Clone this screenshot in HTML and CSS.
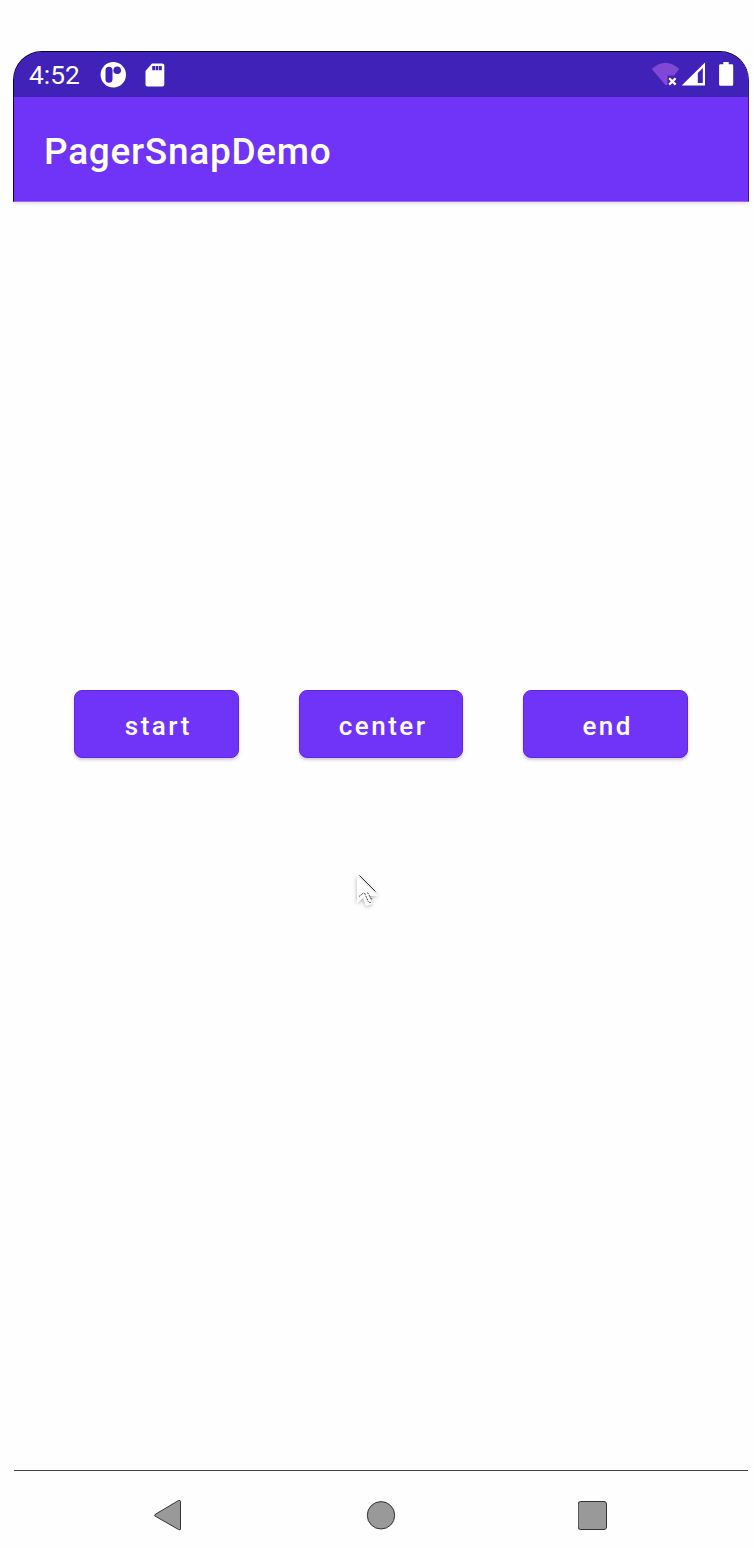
FILE: index.html
```
<!DOCTYPE html>
<html lang="en">
<head>
<meta charset="utf-8">
<title>PagerSnapDemo</title>
<link rel="stylesheet" href="styles.css">
</head>
<body>
<div class="phone">
  <header class="top">
    <div class="status">
      <span class="clock">4:52</span>
      <svg class="app-icon" width="26" height="26" viewBox="0 0 26 26">
        <circle cx="13.3" cy="12.7" r="12.7" fill="#fff"/>
        <rect x="5.5" y="4.8" width="7" height="16" rx="3.5" fill="#4022b8"/>
        <circle cx="17.2" cy="8.3" r="3.8" fill="#4022b8"/>
      </svg>
      <svg class="sd-icon" width="20" height="24" viewBox="0 0 20 24">
        <path d="M7 .5H17Q19.3 .5 19.3 2.5V21.5Q19.3 23.5 17.3 23.5H2.5Q.5 23.5.5 21.5V8Z" fill="#fff"/>
        <path d="M7.2 3h2.8v4.3H7.2zM10.6 3h2.8v4.3h-2.8zM14 3h2.8v4.3H14z" fill="#4022b8"/>
      </svg>
      <svg class="signals" width="84" height="28" viewBox="0 0 84 28">
        <path d="M-.2 8Q13.3-4.5 27.3 8L22 14.5H15.5V24H13.3Z" fill="#8148d5"/>
        <path d="M17.2 17.2l6.4 6.4M23.6 17.2l-6.4 6.4" stroke="#fff" stroke-width="2.3"/>
        <path d="M29.7 24.5L53 1.5V24.5Z" fill="#fff"/>
        <path d="M45.8 12L50.8 7V22H45.8Z" fill="#4022b8"/>
        <path d="M71.3 1h5.4v2.2H80q1.2 0 1.2 1.2V23.5q0 1.2-1.2 1.2H68.3q-1.2 0-1.2-1.2V4.4q0-1.2 1.2-1.2h3Z" fill="#fff"/>
      </svg>
    </div>
    <h1 class="title">PagerSnapDemo</h1>
  </header>
  <main class="content">
    <div class="buttons">
      <button class="btn">start</button>
      <button class="btn">center</button>
      <button class="btn">end</button>
    </div>
    <svg class="pointer" width="32" height="40" viewBox="0 0 32 40">
      <path d="M5 4V32L11 27L14 35L20 33L17 25H26Z" fill="#fff"/>
      <path d="M7.5 4.5L23.5 20.5" stroke="#333" stroke-width="1"/>
      <path d="M7 25.5L12 21.5M12.5 22L16.5 31M15.5 21.5L20 29" stroke="#444" stroke-width="1" stroke-dasharray="2 1" fill="none"/>
      <path d="M17 31.5h2" stroke="#b05070" stroke-width="1"/>
    </svg>
  </main>
  <nav class="nav">
    <svg class="back" width="30" height="34" viewBox="0 0 30 34"><path d="M2 15.5L25.5 1.5Q27.5 1 27.5 2.5V30Q27.5 31.5 25.5 30.5L2 17Q1 16.2 2 15.5Z" fill="#999" stroke="#333"/></svg>
    <svg class="home" width="30" height="30" viewBox="0 0 30 30"><circle cx="15" cy="14.3" r="13.7" fill="#999" stroke="#333"/></svg>
    <svg class="recent" width="30" height="30" viewBox="0 0 30 30"><rect x=".2" y=".5" width="28.3" height="28" rx="2.5" fill="#999" stroke="#333"/></svg>
  </nav>
</div>
</body>
</html>
```
FILE: styles.css
```
* { box-sizing: border-box; }
body {
  margin: 0;
  background: #fefefe;
  font-family: Roboto, "Liberation Sans", sans-serif;
  color: #fff;
}
.phone {
  display: flex;
  flex-direction: column;
  width: 754px;
  height: 1548px;
  padding: 51px 5px 0 13px;
}
.top {
  height: 151px;
  flex: none;
  border: 1px solid #08003a;
  border-right: 1px dotted #000;
  border-bottom: 1px solid #a365ee;
  border-radius: 29px 29px 0 0;
  background: #7034f8;
  overflow: hidden;
  box-shadow: 0 3px 3px -1px #e4e4e4;
}
.status {
  display: flex;
  align-items: center;
  height: 45px;
  padding: 0 12.5px 0 15px;
  background: #4022b8;
}
.clock {
  width: 71px;
  font-size: 26.3px;
  line-height: 45px;
  padding-top: 1px;
}
.sd-icon { margin-left: 19px; }
.signals { margin: 0 0 0 auto; }
.title {
  margin: 0;
  padding-left: 30px;
  font-size: 37px;
  font-weight: 500;
  line-height: 110px;
  letter-spacing: 0.72px;
}
.content { flex: 1; }
.buttons {
  display: flex;
  gap: 60px;
  padding: 488px 0 0 61px;
}
.btn {
  width: 164.7px;
  height: 68.4px;
  padding: 3px 0 0 4px;
  border: 1px solid #6226df;
  border-radius: 8px;
  background: #7034f8;
  box-shadow: 0 2px 3px rgba(80, 40, 120, 0.25);
  color: #fff;
  font: 500 26px/1 Roboto, "Liberation Sans", sans-serif;
  letter-spacing: 2.5px;
}
.pointer {
  display: block;
  margin: 112.6px 0 0 339px;
  filter: drop-shadow(0 1px 2px rgba(0, 0, 0, 0.3));
}
.nav {
  display: flex;
  align-items: center;
  height: 78px;
  flex: none;
  margin: 0 1px;
  padding: 13px 0 0 139px;
  border-top: 1px solid #444;
}
.home { margin-left: 183px; }
.recent { margin-left: 182px; }
```
